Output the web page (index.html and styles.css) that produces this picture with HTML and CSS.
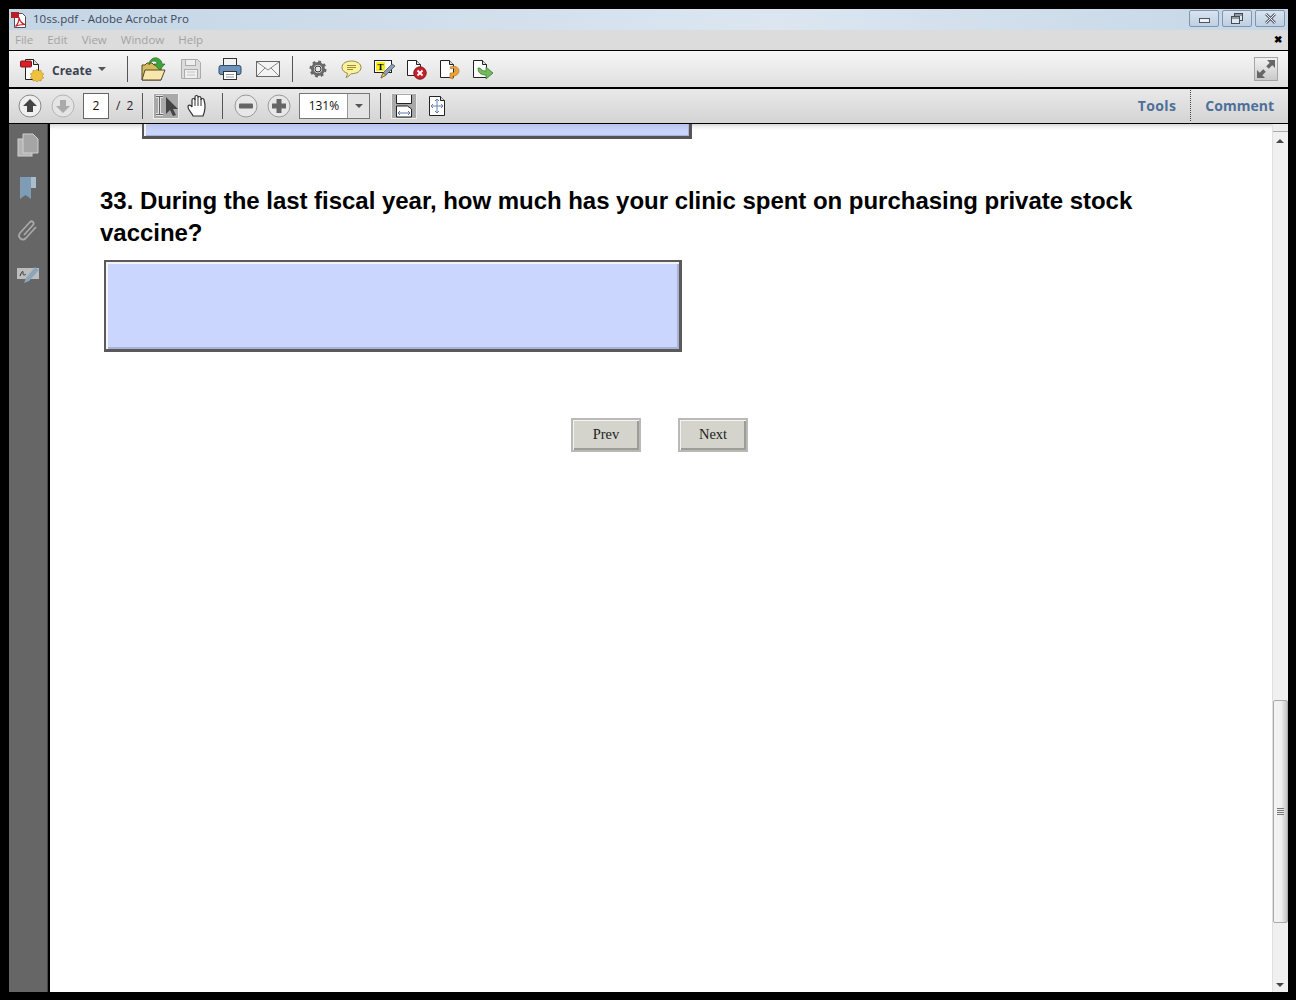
FILE: index.html
```html
<!DOCTYPE html>
<html lang="en">
<head>
<meta charset="utf-8">
<title>10ss.pdf - Adobe Acrobat Pro</title>
<link rel="stylesheet" href="styles.css">
</head>
<body>
<div class="window">
  <header class="titlebar">
    <svg class="app-icon" width="18" height="18" viewBox="0 0 18 18"><path d="M4.500 2.500h8l3 3v11h-11z" fill="#fff" stroke="#5a4a4a"/><rect x="1" y="1" width="8" height="6" fill="#b32025"/><path d="M5.500 15.500c2-2 3.500-5 3.500-9 1 4 2.500 6 6 7-4 0-6.500 0-9.500 2z" fill="none" stroke="#c0272d" stroke-width="1.200"/></svg>
    <span class="title">10ss.pdf - Adobe Acrobat Pro</span>
    <div class="winbtns">
      <div class="winbtn"><span class="min"></span></div>
      <div class="winbtn"><svg width="14" height="12" viewBox="0 0 14 12"><rect x="4.500" y=".5" width="8" height="7" fill="#dfe8f1" stroke="#444c57"/><rect x="1.500" y="3.500" width="8" height="7" fill="#dfe8f1" stroke="#444c57"/><path d="M2 5h7M5 2h7" stroke="#444c57"/></svg></div>
      <div class="winbtn"><svg width="13" height="11" viewBox="0 0 13 11"><path d="M2 1l9 9M11 1l-9 9" stroke="#59626e" stroke-width="2.800"/><path d="M2 1l9 9M11 1l-9 9" stroke="#f2f5f8" stroke-width="1"/></svg></div>
    </div>
  </header>
  <nav class="menubar">
    <span>File</span><span>Edit</span><span>View</span><span>Window</span><span>Help</span>
    <b class="menu-close">✖</b>
  </nav>
  <div class="toolbar tb1">
    <svg class="i-create" width="26" height="26" viewBox="0 0 26 26"><path d="M6.500 3.500h8l5 5v15h-13z" fill="#fff" stroke="#222"/><path d="M14.500 3.500v5h5" fill="#ddd" stroke="#222"/><rect x="1.500" y="5" width="11" height="6" rx="1" fill="#d72027" stroke="#8c1418"/><path d="M18 13l1.500 2 2.500-.8.3 2.500 2.400 1-1.400 2.200 1.400 2.100-2.400 1-.3 2-2.500-.5-1.500 1.500-1.500-1.500-2.500.5-.3-2-2.400-1 1.400-2.100-1.400-2.200 2.400-1 .3-2.500 2.500.8z" fill="#eec13f" stroke="#b68a20" stroke-width=".6"/></svg>
    <span class="create">Create</span>
    <span class="caret"></span>
    <span class="sep s1"></span>
    <svg class="ic open" width="26" height="26" viewBox="0 0 26 26"><path d="M2 24V9h3l2-2h5l2 2h7v15z" fill="#d9b95d" stroke="#54492a"/><path d="M2 24l3-10h20l-4 10z" fill="#f8e7ad" stroke="#54492a"/><path d="M9 9c0-5 4-8 8-7 3 1 5 3 5 6h3l-5.500 6-5.500-6h3c0-2-1-3-3-3-2.500 0-4 2-5 4z" fill="#3fa23a" stroke="#256f22" stroke-width=".7"/></svg>
    <svg class="ic save" width="22" height="22" viewBox="0 0 22 22"><path d="M1.500 1.500h16l3 3v16h-19z" fill="#dcdcdc" stroke="#ababab"/><rect x="5.500" y="1.500" width="10" height="6" fill="#eee" stroke="#ababab"/><rect x="4.500" y="11.500" width="13" height="9" fill="#efefef" stroke="#ababab"/><path d="M7 14h8M7 17h8" stroke="#c5c5c5"/></svg>
    <svg class="ic print" width="24" height="24" viewBox="0 0 24 24"><rect x="5.500" y="1.500" width="13" height="8" fill="#f2f2f2" stroke="#333"/><rect x="1" y="8.500" width="22" height="9" rx="2" fill="#6d93ba" stroke="#2f4c69"/><rect x="5.500" y="14.500" width="13" height="8" fill="#fff" stroke="#333"/><path d="M8 17.500h8M8 20h8" stroke="#999"/></svg>
    <svg class="ic mail" width="24" height="16" viewBox="0 0 24 16"><rect x=".5" y=".5" width="23" height="15" fill="#f4f4f4" stroke="#666"/><path d="M1 1l11 8 11-8M1 15l8-8M23 15l-8-8" fill="none" stroke="#888"/></svg>
    <span class="sep s2"></span>
    <svg class="ic gear" width="18" height="18" viewBox="0 0 18 18"><circle cx="9" cy="9" r="5.500" fill="none" stroke="#6a6a6a" stroke-width="3"/><circle cx="9" cy="9" r="7.400" fill="none" stroke="#666" stroke-width="2.200" stroke-dasharray="2.900 2.910"/><circle cx="9" cy="9" r="3" fill="#e8e8e8" stroke="#333"/></svg>
    <svg class="ic bubble" width="21" height="19" viewBox="0 0 21 19"><path d="M10.500 1C5 1 1 3.500 1 7.500c0 3 2.500 5 5.500 5.800-.2 1.700-.8 3.200-1.500 4.200 2.200-.8 4-2.200 5-3.800h.5c5.500 0 9.500-2.500 9.500-6.200S16 1 10.500 1z" fill="#fbf29b" stroke="#8d8752"/><path d="M6 5.500h9M6 7.500h9M6 9.500h6" stroke="#9a8e3c"/></svg>
    <svg class="ic note" width="21" height="19" viewBox="0 0 21 19"><rect x=".5" y=".5" width="17" height="12" fill="#fff" stroke="#222"/><rect x="2" y="2" width="9" height="9" fill="#f5ee1e"/><text x="6.500" y="9.500" class="t-glyph">T</text><path d="M7 18l2-5L18 4l3 2-9 9z" fill="#8ba0b8" stroke="#444" stroke-width=".7"/><path d="M7 18l2-5 3 2z" fill="#e8c65a" stroke="#6b5a22" stroke-width=".6"/></svg>
    <svg class="ic del" width="21" height="21" viewBox="0 0 21 21"><path d="M1.500 1.500h9l4 4v11h-13z" fill="#fff" stroke="#222"/><path d="M10.500 1.500v4h4" fill="#ddd" stroke="#222"/><circle cx="14" cy="14" r="6.200" fill="#c8202a" stroke="#7d1219"/><path d="M11.500 11.500l5 5M16.500 11.500l-5 5" stroke="#fff" stroke-width="1.800"/></svg>
    <svg class="ic redo" width="21" height="21" viewBox="0 0 21 21"><path d="M1.500 1.500h9l4 4v13h-13z" fill="#fff" stroke="#222"/><path d="M10.500 1.500v4h4" fill="#ddd" stroke="#222"/><path d="M11 8c4-2 9 0 9 4 0 3-3 5-6 5v3l-3-1v-5c3 0 5-.5 5-2.500S14 9 12 10z" fill="#eca334" stroke="#a5691b" stroke-width=".6"/></svg>
    <svg class="ic share" width="22" height="21" viewBox="0 0 22 21"><path d="M1.500 1.500h9l4 4v13h-13z" fill="#fff" stroke="#222"/><path d="M10.500 1.500v4h4" fill="#ddd" stroke="#222"/><path d="M6 9c0 5 3 7 8 7v4l7-6-7-6v4c-3 0-5-1-6-3z" fill="#74b95c" stroke="#2f7326" stroke-width=".7"/></svg>
    <div class="expand"><svg width="22" height="22" viewBox="0 0 22 22"><path d="M12 2h8v8l-2.700-2.700-3.500 3.500-2.600-2.600 3.500-3.500zM10 20H2v-8l2.700 2.700 3.500-3.500 2.600 2.600-3.500 3.500z" fill="#666"/></svg></div>
  </div>
  <div class="toolbar tb2">
    <svg class="round-btn first" width="24" height="24" viewBox="0 0 24 24"><circle cx="12" cy="12" r="11" fill="#efefef" stroke="#888"/><path d="M12 5l7 7h-4v6H9v-6H5z" fill="#444"/></svg>
    <svg class="round-btn off" width="24" height="24" viewBox="0 0 24 24"><circle cx="12" cy="12" r="11" fill="#e4e4e4" stroke="#b5b5b5"/><path d="M12 19l-7-7h4V6h6v6h4z" fill="#aaa"/></svg>
    <span class="pagebox">2</span>
    <span class="pagecount">/ 2</span>
    <span class="sep s3"></span>
    <div class="active sel"><svg width="24" height="24" viewBox="0 0 24 24"><path d="M2 2.500h7M2 20.500h7M5.500 3v17" stroke="#e2e2e2" stroke-width="3" fill="none"/><path d="M2 2.500h7M2 20.500h7M5.500 3v17" stroke="#666" fill="none"/><path d="M12 3v17l4-4 3 6 3-1-3-6h5z" fill="#444"/></svg></div>
    <svg class="hand" width="24" height="24" viewBox="0 0 22 24"><path d="M6 22c-1-3-5-6-5-9s3-2 4 0V6c0-2 3-2 3 0V3c0-2 3-2 3 0v1c0-2 3-2 3 0v2c0-2 3-2 3 0 2 6 1 11-1 16z" fill="#fff" stroke="#333" stroke-width="1.200"/><path d="M8 5v7M11 4v8M14 5v7" stroke="#333"/></svg>
    <span class="sep s4"></span>
    <svg class="round-btn minus" width="24" height="24" viewBox="0 0 24 24"><circle cx="12" cy="12" r="11" fill="#e8e8e8" stroke="#999"/><rect x="5" y="9.500" width="14" height="5" rx="1" fill="#666"/></svg>
    <svg class="round-btn plus" width="24" height="24" viewBox="0 0 24 24"><circle cx="12" cy="12" r="11" fill="#e8e8e8" stroke="#999"/><path d="M9.500 5h5v4.500H19v5h-4.500V19h-5v-4.500H5v-5h4.500z" fill="#666"/></svg>
    <div class="zoombox"><span class="zoomval">131%</span><span class="zoomdrop"><i class="caret dark"></i></span></div>
    <span class="sep s5"></span>
    <div class="active fit"><svg width="20" height="24" viewBox="0 0 20 24"><path d="M2.500 1v8.500h15V1" fill="#fff" stroke="#222"/><path d="M2.500 23v-11h11l4 3v8z" fill="#fff" stroke="#222"/><path d="M4 19h12M4 19l2-2M4 19l2 2M16 19l-2-2M16 19l-2 2" stroke="#5f78b0" fill="none"/></svg></div>
    <svg class="fitpage" width="18" height="22" viewBox="0 0 18 22"><path d="M1.500 1.500h11l4 4v15h-15z" fill="#fff" stroke="#222"/><path d="M12.500 1.500v4h4" fill="#ddd" stroke="#222"/><path d="M9 4v14M3 11h12M9 4l-2 2M9 4l2 2M9 18l-2-2M9 18l2-2M3 11l2-2M3 11l2 2M15 11l-2-2M15 11l-2 2" stroke="#6580b8" fill="none"/></svg>
    <div class="panes"><span class="pane tools">Tools</span><span class="pane">Comment</span></div>
  </div>
  <div class="body">
    <aside class="sidebar">
      <svg width="22" height="24" viewBox="0 0 22 24"><rect x="1" y="6" width="14" height="17" fill="#b4b4b4" stroke="#d0d0d0"/><path d="M6 1h10l5 5v14H6z" fill="#a5a5a5" stroke="#d0d0d0"/></svg>
      <svg width="18" height="24" viewBox="0 0 18 24"><path d="M1 1h11v22l-5.500-4L1 23z" fill="#7e9db5"/><path d="M12 1h5v11h-5z" fill="#a9bdcc"/></svg>
      <svg width="22" height="24" viewBox="0 0 22 24"><path d="M7 16l9-10c2-2-1-5-3-3L3 14c-3 4 2 9 6 5L19 8" fill="none" stroke="#a8a8a8" stroke-width="1.800"/></svg>
      <svg class="sign" width="24" height="19" viewBox="0 0 24 19"><path d="M1 3h22v11H1z" fill="#bdbdbd"/><path d="M4 11c2-5 3-6 3-3s2 2 3 1" fill="none" stroke="#333"/><path d="M8 18l2-5 9-11 4 3-10 11z" fill="#8ba5bb"/></svg>
    </aside>
    <main class="page">
      <div class="prev-field"></div>
      <h1 class="question">33. During the last fiscal year, how much has your clinic spent on purchasing private stock vaccine?</h1>
      <div class="field"></div>
      <div class="buttons"><button class="btn">Prev</button><button class="btn">Next</button></div>
    </main>
    <div class="scrollbar">
      <div class="scroll-top"></div>
      <div class="arrow up"></div>
      <div class="track"><div class="thumb"><span class="grip"></span></div></div>
      <div class="arrow down"></div>
    </div>
  </div>
</div>
</body>
</html>
```
FILE: styles.css
```css
* { box-sizing: border-box; }
html, body { margin: 0; height: 1000px; overflow: hidden; background: #000; }
body { padding: 9px 8px 8px 9px; font-family: "Open Sans", "Noto Sans", sans-serif; }
.window { height: 983px; display: flex; flex-direction: column; background: #000; }

.titlebar { height: 21px; flex: none; display: flex; align-items: center; background: linear-gradient(90deg, #c4d5e5, #dbe6f0 60%, #c5d6e6); }
.app-icon { margin-left: 1px; flex: none; }
.title { margin-left: 5px; font-size: 11.5px; color: #3c4a5c; padding-bottom: 2px; }
.winbtns { margin-left: auto; display: flex; gap: 3px; margin-right: 3px; align-self: flex-start; }
.winbtn { width: 30px; height: 17px; margin-top: 1px; border: 1px solid #7f94ad; border-radius: 2px; background: linear-gradient(#d8e3ee, #bfd0e2); display: flex; align-items: center; justify-content: center; }
.min { width: 11px; height: 5px; background: #f0f3f6; border: 1px solid #4c5560; margin-top: 3px; }

.menubar { height: 20px; flex: none; background: #dcdcdc; display: flex; align-items: center; padding: 0 0 2px 6px; gap: 14px; font-size: 11.5px; color: #a3a3a3; }
.menu-close { margin-left: auto; margin-right: 6px; font-size: 10px; color: #000; }

.toolbar { flex: none; display: flex; align-items: center; margin-top: 1px; }
.tb1 { height: 36px; background: linear-gradient(#f6f6f6, #e0e0e0); }
.tb2 { height: 34px; margin-top: 2px; background: linear-gradient(#e9e9e9, #d4d4d4); }

.i-create { margin-left: 10px; flex: none; }
.create { margin-left: 7px; font-size: 12px; font-weight: 700; color: #3b4350; padding-top: 2px; }
.caret { display: inline-block; margin-left: 6px; width: 0; height: 0; border-left: 4px solid transparent; border-right: 4px solid transparent; border-top: 4px solid #555; }
.caret.dark { margin: 0; }
.sep { width: 1px; height: 26px; background: #555; flex: none; }
.s1 { margin-left: 21px; }
.ic { flex: none; }
.open { margin-left: 12px; }
.save { margin-left: 14px; }
.print { margin-left: 16px; }
.mail { margin-left: 14px; }
.s2 { margin-left: 12px; }
.gear { margin-left: 16px; }
.bubble { margin-left: 14px; }
.note { margin-left: 12px; }
.del { margin-left: 11px; }
.redo { margin-left: 12px; }
.share { margin-left: 12px; }
.expand { margin-left: auto; margin-right: 10px; width: 24px; height: 24px; border: 1px solid #a5a5a5; background: linear-gradient(#f2f2f2, #c9c9c9); display: flex; align-items: center; justify-content: center; }

.round-btn { flex: none; }
.first { margin-left: 9px; }
.off { margin-left: 9px; }
.pagebox { margin-left: 8px; width: 26px; height: 26px; padding-bottom: 2px; background: #fff; border: 1px solid #666; display: flex; align-items: center; justify-content: center; font-size: 12px; color: #111; }
.pagecount { margin-left: 7px; padding-bottom: 2px; font-size: 12px; color: #222; white-space: nowrap; word-spacing: 3px; }
.s3 { margin-left: 9px; }
.active { flex: none; height: 26px; width: 26px; background: #a9a9a9; border: 1px solid #eee; display: flex; align-items: center; justify-content: center; }
.sel { margin-left: 10px; }
.hand { margin-left: 7px; flex: none; }
.s4 { margin-left: 12px; }
.minus { margin-left: 11px; }
.plus { margin-left: 9px; }
.zoombox { margin-left: 8px; width: 71px; height: 26px; display: flex; background: #fff; border: 1px solid #777; }
.zoomval { flex: 1; display: flex; align-items: center; justify-content: center; padding-bottom: 2px; font-size: 12px; color: #111; }
.zoomdrop { width: 22px; border-left: 1px solid #999; background: #e4e4e4; display: flex; align-items: center; justify-content: center; }
.s5 { margin-left: 10px; }
.fit { margin-left: 10px; }
.fitpage { margin-left: 11px; flex: none; }
.panes { margin-left: auto; display: flex; align-items: center; align-self: stretch; padding: 0 14px 2px 0; }
.pane { font-size: 14px; font-weight: 700; color: #4d7099; }
.tools { padding: 6px 14px 6px 0; margin-right: 14px; border-right: 1px dotted #444; letter-spacing: .4px; }

.body { flex: 1; min-height: 0; margin-top: 1px; display: flex; }
.sidebar { width: 39px; flex: none; background: #666; display: flex; flex-direction: column; align-items: center; padding-top: 9px; gap: 19px; border-right: 1px solid #444; }
.sign { margin-top: 3px; }
.page { flex: 1; min-width: 0; margin-left: 2px; background: #fff; box-shadow: inset 0 6px 6px -6px #aaa; }
.prev-field { margin-left: 92px; width: 550px; height: 15px; background: linear-gradient(#b8c3ea, #c9d5fd 60%); border: solid #555; border-width: 0 3px 3px 2px; box-shadow: inset 2px 0 0 #f0f0f0, inset -1px -1px 0 #aab2d6; }
.question { margin: 46px 90px 0 50px; font: 700 24px/32px "Liberation Sans", Arial, sans-serif; color: #000; letter-spacing: -.03px; }
.field { margin: 11px 0 0 54px; width: 578px; height: 92px; background: #cad6fd; border: solid #5a5a5a; border-width: 2px 3px 3px 2px; box-shadow: inset 2px 2px 0 #f4f4f4, inset -2px -2px 0 #aab2d6; }
.buttons { margin: 66px 0 0 521px; display: flex; gap: 37px; }
.btn { width: 70px; height: 34px; padding: 0 0 2px; background: #d4d4cc; border: 2px solid #b9b9b9; box-shadow: inset 1px 1px 0 #f4f4f2, inset -2px -2px 0 #9d9d95; font: 14.5px "Liberation Serif", serif; color: #222; }

.scrollbar { width: 16px; flex: none; background: #f0f0f0; display: flex; flex-direction: column; border-left: 1px solid #e0e0e0; }
.scroll-top { height: 8px; flex: none; background: #ececec; border-bottom: 1px solid #aaa; }
.arrow { height: 16px; flex: none; position: relative; }
.arrow::after { content: ""; position: absolute; left: 3px; top: 7px; border-left: 4px solid transparent; border-right: 4px solid transparent; }
.up::after { border-bottom: 4px solid #444; }
.down::after { border-top: 4px solid #444; }
.track { flex: 1; display: flex; flex-direction: column; justify-content: flex-end; padding-bottom: 53px; }
.thumb { height: 223px; border: 1px solid #aaa; border-radius: 2px; background: linear-gradient(90deg, #f4f4f4, #f0f0f0 55%, #c5c5c5); display: flex; align-items: center; justify-content: center; }
.grip { width: 7px; height: 7px; background: repeating-linear-gradient(#777 0 1px, #eee 1px 2px); }
.t-glyph { font: 700 9px "Liberation Serif", serif; text-anchor: middle; fill: #000; }
```
